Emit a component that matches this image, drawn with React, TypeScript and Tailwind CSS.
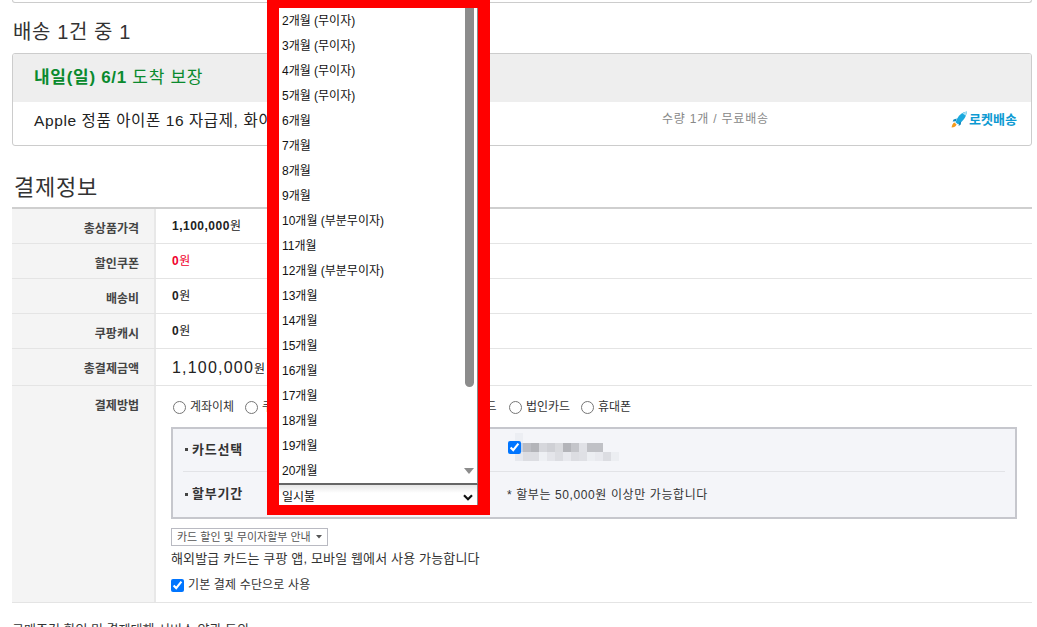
const FONT = "font-['Liberation_Sans','Noto_Sans_CJK_KR',sans-serif]";

const months = [
  "2개월 (무이자)",
  "3개월 (무이자)",
  "4개월 (무이자)",
  "5개월 (무이자)",
  "6개월",
  "7개월",
  "8개월",
  "9개월",
  "10개월 (부분무이자)",
  "11개월",
  "12개월 (부분무이자)",
  "13개월",
  "14개월",
  "15개월",
  "16개월",
  "17개월",
  "18개월",
  "19개월",
  "20개월",
];

const rows = [
  { label: "총상품가격", amount: "1,100,000", tone: "text-[#222]", h: "h-[35px]" },
  { label: "할인쿠폰", amount: "0", tone: "text-[#f0002c]", h: "h-[35px]" },
  { label: "배송비", amount: "0", tone: "text-[#222]", h: "h-[35px]" },
  { label: "쿠팡캐시", amount: "0", tone: "text-[#222]", h: "h-[35px]" },
];

const payMethods = [
  { label: "계좌이체", w: "w-[72px]" },
  { label: "쿠페이 머니", w: "w-[165px]" },
  { label: "신용/체크카드", w: "w-[99px]" },
  { label: "법인카드", w: "w-[72px]" },
  { label: "휴대폰", w: "w-[70px]" },
];

// blurred card name in the screenshot
const mosaicRows = [
  { y: 0, h: 10, cells: ["#eceef3"] },
  { y: 10, h: 9, cells: ["#c3d2ea", "#bcbdc3", "#b3b4b9", "#d6d7dc", "#cfd0d5", "#d9dade", "#b3b4b9", "#c4c5ca", "#e0e1e6", "#c0c1c6", "#c0c1c6"] },
  { y: 19, h: 9, cells: ["#e6e8ee", "#dcdde2", "#dcdde2", "#eef0f4", "#e4e5ea", "#dcdde2", "#e8e9ee", "#dcdde2", "#dfe0e5", "#eceef2", "#e8e9ee", "#dcdde2", "#eceef2"] },
];

function RocketBadge() {
  return (
    <div className="flex items-center gap-[1px]">
      <svg width="17" height="17" viewBox="0 0 17 17">
        <path d="M16 0.5C11.5 1 8.5 3.5 6.2 7.5L4.5 11.2 7 13.2C11 11.4 15 7 16 0.5Z" fill="#1aa9de" />
        <path d="M16 0.5C14.2 0.8 12.6 1.4 11.4 2.2L14.6 4.8C15.3 3.5 15.8 2 16 0.5Z" fill="#a8e2f5" />
        <path d="M5.8 7.6L2.6 8.4 1.6 10.6 4.8 10.2Z M8 11.8L7.6 15 9.8 13.6 10.2 10.6Z" fill="#1488bd" />
        <path d="M3.4 11.6L5.6 13.4C5 15 3 16.4 0.6 16.6 0.8 14.4 1.8 12.4 3.4 11.6Z" fill="#f59a1b" />
      </svg>
      <span className="text-[13px] leading-[16px] font-bold text-[#0e9ad2]">로켓배송</span>
    </div>
  );
}

function Row({ label, h, children }: { label: string; h: string; children: React.ReactNode }) {
  return (
    <div className={`flex border-b border-[#e4e4e4] ${h}`}>
      <div className="w-[144px] shrink-0 bg-[#f4f4f4] border-r-2 border-[#e8e8e8] pr-[15px] pt-[12px] text-right text-[12px] leading-[16px] font-bold text-[#444]">
        {label}
      </div>
      <div className="flex-1 min-w-0">{children}</div>
    </div>
  );
}

function InstallmentOverlay() {
  return (
    <div className="absolute left-[267px] top-[-4px] w-[223px] h-[519px] border-[12px] border-[#ff0000] bg-white flex flex-col">
      <div className="relative h-[475px] shrink-0 border-r border-[#8a8a8a] border-b-2 border-b-[#666] box-content">
        {months.map((m) => (
          <div key={m} className="h-[25px] pl-[3px] text-[12px] leading-[27px] text-[#111] whitespace-nowrap">
            {m}
          </div>
        ))}
        <div className="absolute right-[3px] top-0 w-[9px] h-[379px] rounded-b-[5px] bg-[#8c8c8c]" />
        <svg className="absolute right-[3px] top-[460px]" width="10" height="6" viewBox="0 0 10 6">
          <path d="M0 0H10L5 6Z" fill="#8c8c8c" />
        </svg>
      </div>
      <div className="flex flex-1 items-center justify-between pl-[3px] pr-[4px] pt-[4px] border-r border-[#8a8a8a] text-[12px] leading-[16px] text-[#111] bg-gradient-to-b from-[#e6e6e6] to-white to-40%">
        <span>일시불</span>
        <svg width="10" height="7" viewBox="0 0 10 7">
          <path d="M1 1.2L5 5.2 9 1.2" fill="none" stroke="#111" strokeWidth="2.2" />
        </svg>
      </div>
    </div>
  );
}

export default function App() {
  return (
    <div className={`relative h-[627px] w-[1037px] overflow-hidden bg-white text-[#222] ${FONT}`}>
      <div className="ml-[12px] w-[1020px] h-[3px] rounded-b-[3px] border border-t-0 border-[#ccc]" />

      <h2 className="mt-[18px] ml-[13px] h-[22px] text-[20px] leading-[22px] font-normal tracking-[0.6px] text-[#333]">
        배송 1건 중 1
      </h2>

      <section className="mt-[10px] ml-[12px] w-[1020px] h-[93px] rounded-[3px] border border-[#ccc] overflow-hidden">
        <div className="h-[48px] bg-[#eeeeee] pl-[21px] pt-[14px] text-[17px] leading-[20px] tracking-[0.7px] text-[#0a8a2e]">
          <b>내일(일) 6/1</b> 도착 보장
        </div>
        <div className="flex items-start h-[43px]">
          <div className="w-[649px] pl-[21px] pt-[9px] text-[15.5px] leading-[20px] tracking-[0.6px] text-[#222] whitespace-nowrap">
            Apple 정품 아이폰 16 자급제, 화이트, 128GB
          </div>
          <div className="w-[289px] pt-[9px] text-[12px] leading-[16px] tracking-[0.8px] text-[#888]">수량 1개 / 무료배송</div>
          <div className="pt-[9px]">
            <RocketBadge />
          </div>
        </div>
      </section>

      <h2 className="mt-[28px] ml-[14px] h-[28px] text-[22px] leading-[28px] font-normal tracking-[0.8px] text-[#333]">
        결제정보
      </h2>

      <div className="mt-[5px] ml-[12px] w-[1020px] border-t-2 border-[#cfcfcf]">
        {rows.map((r) => (
          <Row key={r.label} label={r.label} h={r.h}>
            <div className={`pl-[16px] pt-[9px] text-[12px] leading-[16px] ${r.tone}`}>
              <b className="tracking-[0.5px]">{r.amount}</b>원
            </div>
          </Row>
        ))}
        <Row label="총결제금액" h="h-[37px]">
          <div className="pl-[16px] pt-[9px] text-[12px] leading-[20px] text-[#222]">
            <span className="text-[16px] tracking-[1.2px]">1,100,000</span>원
          </div>
        </Row>

        <div className="flex h-[217px] border-b border-[#e4e4e4]">
          <div className="w-[144px] shrink-0 bg-[#f4f4f4] border-r-2 border-[#e8e8e8] pr-[15px] pt-[12px] text-right text-[12px] leading-[16px] font-bold text-[#444]">
            결제방법
          </div>
          <div className="flex-1 min-w-0 pl-[15px]">
            <div className="flex items-center h-[16px] mt-[13px] text-[12px] leading-[16px] text-[#333]">
              {payMethods.map((p) => (
                <label key={p.label} className={`flex items-center shrink-0 whitespace-nowrap ${p.w}`}>
                  <input type="radio" name="pay" className="ml-[2px] mr-[4px] w-[13px] h-[13px]" />
                  {p.label}
                </label>
              ))}
            </div>

            <div className="mt-[12px] w-[846px] h-[92px] border-2 border-[#c6c7cd] bg-[#f4f5f9] px-[10px]">
              <div className="flex h-[43px] border-b border-[#e2e3e7]">
                <PanelLabel text="카드선택" />
                <div className="ml-[229px] flex items-start pt-[12px]">
                  <input type="checkbox" defaultChecked className="relative z-10 m-0 w-[13px] h-[13px]" />
                  <svg className="block ml-[-6px] mt-[-8px]" width="106" height="28" viewBox="0 0 106 28">
                    {mosaicRows.map((row) =>
                      row.cells.map((c, i) => (
                        <rect key={`${row.y}-${i}`} x={i * 8} y={row.y} width="8" height={row.h} fill={c} />
                      )),
                    )}
                  </svg>
                </div>
              </div>
              <div className="flex h-[45px]">
                <PanelLabel text="할부기간" />
                <div className="ml-[228px] flex items-center pt-[1px] text-[12px] leading-[16px] tracking-[0.6px] text-[#333]">
                  * 할부는 50,000원 이상만 가능합니다
                </div>
              </div>
            </div>

            <button className="mt-[9px] flex items-center h-[18px] w-[157px] border border-[#b9bac2] bg-white pl-[5px] text-[11px] leading-[14px] text-[#555]">
              카드 할인 및 무이자할부 안내
              <svg className="ml-[5px]" width="6" height="4" viewBox="0 0 6 4">
                <path d="M0 0H6L3 3.5Z" fill="#555" />
              </svg>
            </button>
            <p className="mt-[5px] text-[13px] leading-[16px] tracking-[0.15px] text-[#333] whitespace-nowrap">
              해외발급 카드는 쿠팡 앱, 모바일 웹에서 사용 가능합니다
            </p>
            <label className="mt-[10px] flex items-center text-[12px] leading-[16px] tracking-[0.15px] text-[#333]">
              <input type="checkbox" defaultChecked className="m-0 mr-[4px] w-[13px] h-[13px]" />
              기본 결제 수단으로 사용
            </label>
          </div>
        </div>
      </div>

      <p className="mt-[19px] ml-[12px] text-[13px] leading-[16px] text-[#333]">구매조건 확인 및 결제대행 서비스 약관 동의</p>

      <InstallmentOverlay />
    </div>
  );
}

function PanelLabel({ text }: { text: string }) {
  return (
    <div className="flex items-center w-[96px] shrink-0 pl-[2px] pb-[1px] text-[13px] leading-[18px] font-bold text-[#333] tracking-[0.8px]">
      <span className="mr-[4px] h-[3px] w-[3px] bg-[#444]" />
      {text}
    </div>
  );
}
